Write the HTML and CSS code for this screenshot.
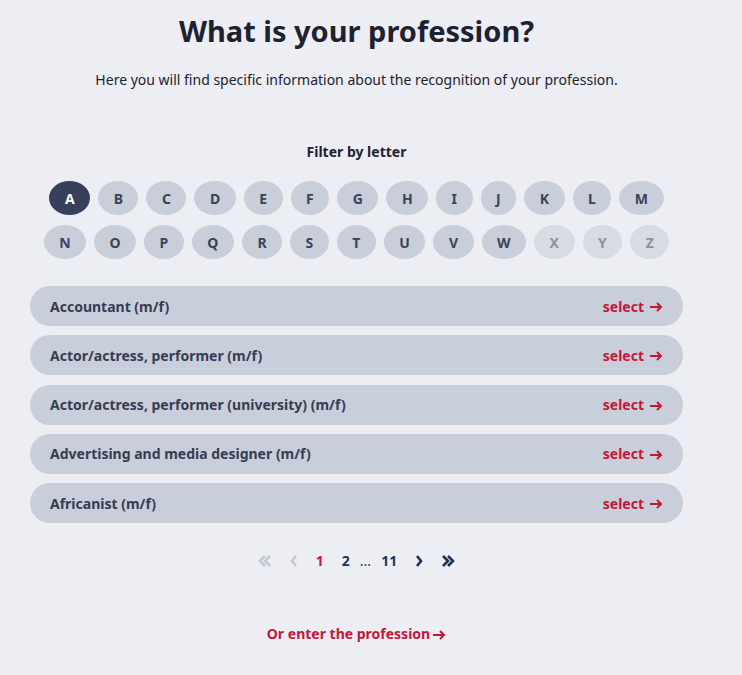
FILE: index.html
```html
<!DOCTYPE html>
<html lang="en">
<head>
    <meta charset="UTF-8">
    <meta name="viewport" content="width=device-width, initial-scale=1.0">
    <title>Recognition - What is your profession?</title>
    <link rel="stylesheet" href="styles.css">
</head>
<body>
    <div class="container">
        <h1>What is your profession?</h1>
        <p class="intro">Here you will find specific information about the recognition of your profession.</p>

        <div class="filter">
            <div class="filter-title">Filter by letter</div>
            <div class="letters">
                <button class="letter active">A</button>
                <button class="letter">B</button>
                <button class="letter">C</button>
                <button class="letter">D</button>
                <button class="letter">E</button>
                <button class="letter">F</button>
                <button class="letter">G</button>
                <button class="letter">H</button>
                <button class="letter">I</button>
                <button class="letter">J</button>
                <button class="letter">K</button>
                <button class="letter">L</button>
                <button class="letter">M</button>
            </div>
            <div class="letters">
                <button class="letter">N</button>
                <button class="letter">O</button>
                <button class="letter">P</button>
                <button class="letter">Q</button>
                <button class="letter">R</button>
                <button class="letter">S</button>
                <button class="letter">T</button>
                <button class="letter">U</button>
                <button class="letter">V</button>
                <button class="letter">W</button>
                <button class="letter disabled">X</button>
                <button class="letter disabled">Y</button>
                <button class="letter disabled">Z</button>
            </div>
        </div>

        <ul class="professions">
            <li class="profession">
                <span class="name">Accountant (m/f)</span>
                <a class="select" href="#">select <svg class="arrow" viewBox="0 0 14 10"><path d="M1 5h11M8 1l4 4-4 4"/></svg></a>
            </li>
            <li class="profession">
                <span class="name">Actor/actress, performer (m/f)</span>
                <a class="select" href="#">select <svg class="arrow" viewBox="0 0 14 10"><path d="M1 5h11M8 1l4 4-4 4"/></svg></a>
            </li>
            <li class="profession">
                <span class="name">Actor/actress, performer (university) (m/f)</span>
                <a class="select" href="#">select <svg class="arrow" viewBox="0 0 14 10"><path d="M1 5h11M8 1l4 4-4 4"/></svg></a>
            </li>
            <li class="profession">
                <span class="name">Advertising and media designer (m/f)</span>
                <a class="select" href="#">select <svg class="arrow" viewBox="0 0 14 10"><path d="M1 5h11M8 1l4 4-4 4"/></svg></a>
            </li>
            <li class="profession">
                <span class="name">Africanist (m/f)</span>
                <a class="select" href="#">select <svg class="arrow" viewBox="0 0 14 10"><path d="M1 5h11M8 1l4 4-4 4"/></svg></a>
            </li>
        </ul>

        <nav class="pagination">
            <span class="page-nav off"><svg viewBox="0 0 14 12"><path d="M7 1L2 6l5 5M12 1L7 6l5 5"/></svg></span>
            <span class="page-nav off"><svg viewBox="0 0 8 12"><path d="M6 1L2 6l4 5"/></svg></span>
            <a class="page current" href="#">1</a>
            <a class="page" href="#">2</a>
            <span class="dots">...</span>
            <a class="page" href="#">11</a>
            <a class="page-nav" href="#"><svg viewBox="0 0 8 12"><path d="M2 1l4 5-4 5"/></svg></a>
            <a class="page-nav" href="#"><svg viewBox="0 0 14 12"><path d="M2 1l5 5-5 5M7 1l5 5-5 5"/></svg></a>
        </nav>

        <div class="search-link">
            <a href="#">Or enter the profession<svg class="arrow" viewBox="0 0 14 10"><path d="M1 5h11M8 1l4 4-4 4"/></svg></a>
        </div>
    </div>
</body>
</html>
```

FILE: styles.css
```css
body {
    margin: 0;
    background-color: #edeef3;
    font-family: "Noto Sans", "Open Sans", sans-serif;
    color: #1f2230;
}
.container {
    width: 653px;
    margin-left: 30px;
    padding-top: 12px;
    text-align: center;
}
h1 {
    margin: 0;
    font-size: 29px;
    line-height: 38px;
    font-weight: 700;
    color: #1e2130;
}
.intro {
    margin: 20px 0 0;
    font-size: 14px;
    line-height: 20px;
    color: #202330;
}
.filter {
    margin-top: 52px;
    display: flex;
    flex-direction: column;
    gap: 10px;
}
.filter-title {
    font-size: 14px;
    font-weight: 700;
    line-height: 20px;
    margin-bottom: 9px;
}
.letters {
    display: flex;
    justify-content: center;
    gap: 8px;
}
.letter {
    height: 34px;
    padding: 0 15.5px;
    border: none;
    border-radius: 50%;
    background-color: #c9cedb;
    color: #3a4358;
    font-family: inherit;
    font-size: 14px;
    font-weight: 700;
    cursor: pointer;
}
.letter.active {
    background-color: #36405a;
    color: #ffffff;
}
.letter.disabled {
    background-color: #d7dbe4;
    color: #8c92a1;
    cursor: default;
}
.professions {
    list-style: none;
    margin: 27px 0 0;
    padding: 0;
    display: flex;
    flex-direction: column;
    gap: 9.25px;
}
.profession {
    display: flex;
    justify-content: space-between;
    align-items: center;
    height: 40px;
    padding: 0 20px;
    border-radius: 20px;
    background-color: #c9cedb;
    font-size: 14px;
    font-weight: 700;
}
.name {
    color: #353d52;
}
.select {
    display: flex;
    align-items: center;
    gap: 5px;
    color: #c3173a;
    text-decoration: none;
}
.arrow {
    width: 14px;
    height: 10px;
    margin-top: 2px;
    fill: none;
    stroke: currentColor;
    stroke-width: 2;
}
.pagination {
    display: flex;
    justify-content: center;
    align-items: center;
    gap: 18px;
    margin-top: 28px;
    font-size: 14px;
    font-weight: 700;
}
.page {
    color: #1b3556;
    text-decoration: none;
}
.page.current {
    color: #c3173a;
}
.dots {
    color: #1b3556;
    font-weight: 400;
    margin: 0 -8px;
}
.page-nav {
    display: flex;
    color: #1b3556;
}
.page-nav.off {
    color: #c3c8d4;
}
.page-nav svg {
    height: 12px;
    width: auto;
    fill: none;
    stroke: currentColor;
    stroke-width: 2.6;
}
.search-link {
    margin-top: 52px;
}
.search-link a {
    display: inline-flex;
    align-items: center;
    gap: 2px;
    color: #c3173a;
    font-size: 14px;
    font-weight: 700;
    text-decoration: none;
}
```
